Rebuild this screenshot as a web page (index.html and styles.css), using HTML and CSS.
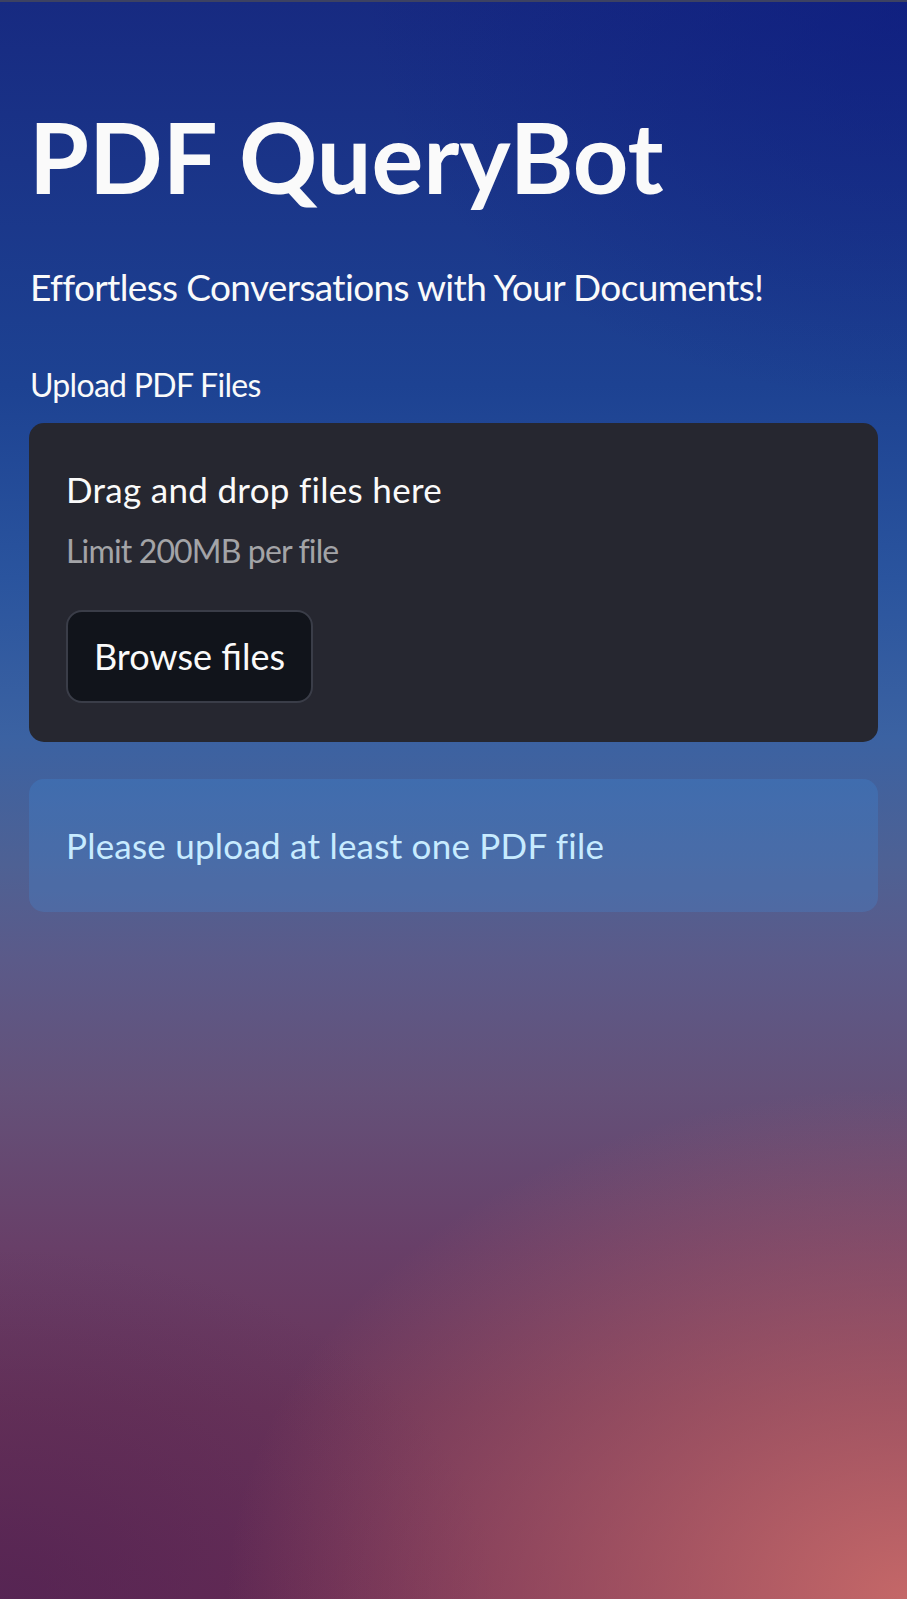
FILE: index.html
```html
<!DOCTYPE html>
<html lang="en">
<head>
<meta charset="utf-8">
<title>PDF QueryBot</title>
<link rel="stylesheet" href="styles.css">
</head>
<body>
<div class="app">
  <main class="main">
    <h1 class="title">PDF QueryBot</h1>
    <p class="subtitle">Effortless Conversations with Your Documents!</p>
    <section class="uploader">
      <label class="uploader-label">Upload PDF Files</label>
      <div class="dropzone">
        <div class="dz-title">Drag and drop files here</div>
        <div class="dz-limit">Limit 200MB per file</div>
        <button class="browse" type="button">Browse files</button>
      </div>
    </section>
    <div class="info">Please upload at least one PDF file</div>
  </main>
</div>
</body>
</html>
```

FILE: styles.css
```css
html, body {
  margin: 0;
  padding: 0;
}

body {
  font-family: Lato, "Open Sans", "Noto Sans", sans-serif;
  color: #fafafa;
}

.app {
  min-height: 1599px;
  box-sizing: border-box;
  border-top: 2px solid #3d4262;
  background:
    radial-gradient(ellipse 75% 32% at 100% 100%, rgba(206, 110, 106, 0.9), rgba(206, 110, 106, 0) 100%),
    radial-gradient(ellipse 55% 22% at 0% 100%, rgba(70, 30, 82, 0.55), rgba(70, 30, 82, 0) 100%),
    radial-gradient(ellipse 60% 25% at 100% 0%, rgba(12, 26, 128, 0.6), rgba(12, 26, 128, 0) 100%),
    linear-gradient(180deg, #172a81 0%, #1a3488 10%, #1d4292 24%, #2a549e 36%, #3b62a2 46%, #4e6194 54%, #5b5a89 60%, #645179 68%, #683f68 78%, #6a3459 88%, #6a2d55 100%);
}

.main {
  display: flex;
  flex-direction: column;
  padding: 0 29px;
}

.title {
  margin: 97px 0 0 0;
  font-size: 97px;
  font-weight: 700;
  line-height: 1.2;
  color: #fafafa;
}

.subtitle {
  margin: 50px 0 0 1px;
  font-size: 37px;
  letter-spacing: -0.65px;
  line-height: 1.2;
  font-weight: 400;
}

.uploader {
  display: flex;
  flex-direction: column;
  margin-top: 56px;
}

.uploader-label {
  margin-left: 1px;
  font-size: 32px;
  letter-spacing: -0.7px;
  line-height: 1.2;
}

.dropzone {
  margin-top: 19px;
  background: #262730;
  border-radius: 15px;
  padding: 45px 37px 39px;
  display: flex;
  flex-direction: column;
  align-items: flex-start;
}

.dz-title {
  font-size: 35px;
  letter-spacing: 0.3px;
  line-height: 1.2;
}

.dz-limit {
  margin-top: 22px;
  font-size: 32px;
  letter-spacing: -0.85px;
  line-height: 1.2;
  color: rgba(250, 250, 250, 0.6);
}

.browse {
  margin-top: 39px;
  width: 247px;
  height: 93px;
  box-sizing: border-box;
  background: #11141b;
  border: 2px solid #3a3d48;
  border-radius: 16px;
  color: #fafafa;
  font-family: inherit;
  font-size: 36px;
  padding: 0;
}

.info {
  margin-top: 37px;
  height: 133px;
  box-sizing: border-box;
  display: flex;
  align-items: center;
  padding: 0 37px;
  border-radius: 15px;
  background: rgba(61, 157, 243, 0.2);
  color: #c7ebff;
  font-size: 35px;
  letter-spacing: 0.23px;
}
```
